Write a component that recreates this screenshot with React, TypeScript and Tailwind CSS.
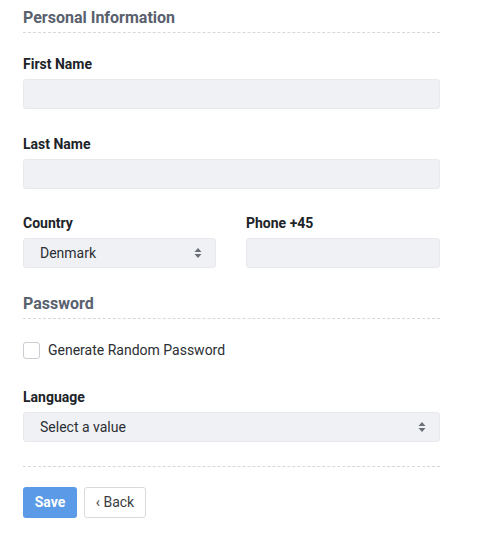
import React from "react";

function Arrows() {
  return (
    <svg width="8" height="12" viewBox="0 0 8 12" className="shrink-0">
      <path d="M4 1 L7.5 5 H0.5 Z" fill="#6b6f76" />
      <path d="M4 11 L7.5 7 H0.5 Z" fill="#6b6f76" />
    </svg>
  );
}

function Label({ children }: { children: React.ReactNode }) {
  return <div className="text-[14px] leading-[17px] font-bold text-[#202328] mb-[6px]">{children}</div>;
}

function Input() {
  return <div className="h-[30px] rounded-[3px] bg-[#f0f1f4] border border-[#e8e9ec]" />;
}

function Select({ value }: { value: string }) {
  return (
    <div className="h-[30px] rounded-[3px] bg-[#f0f1f4] border border-[#e8e9ec] flex items-center justify-between pl-[16px] pr-[13px] text-[14px] text-[#2b2e33]">
      <span>{value}</span>
      <Arrows />
    </div>
  );
}

function Heading({ children }: { children: React.ReactNode }) {
  return (
    <div className="text-[16px] leading-[20px] font-bold text-[#59616e] pb-[4px] border-b border-dashed border-[#d6d8dc]">
      {children}
    </div>
  );
}

export default function App() {
  return (
    <div className="bg-white w-[485px] h-[541px]" style={{ fontFamily: "Roboto, 'Liberation Sans', sans-serif" }}>
      <div className="ml-[23px] w-[417px] pt-[8px]">
        <Heading>Personal Information</Heading>
        <div className="mt-[23px]">
          <Label>First Name</Label>
          <Input />
        </div>
        <div className="mt-[27px]">
          <Label>Last Name</Label>
          <Input />
        </div>
        <div className="mt-[26px] flex gap-[30px]">
          <div className="w-[193px]">
            <Label>Country</Label>
            <Select value="Denmark" />
          </div>
          <div className="flex-1">
            <Label>Phone +45</Label>
            <Input />
          </div>
        </div>
        <div className="mt-[26px]">
          <Heading>Password</Heading>
        </div>
        <div className="mt-[23px] flex items-center gap-[8px] h-[17px]">
          <div className="w-[17px] h-[17px] rounded-[3px] border border-[#c9ccd1] bg-white" />
          <span className="text-[14px] leading-[17px] text-[#2b2e33]">Generate Random Password</span>
        </div>
        <div className="mt-[30px]">
          <Label>Language</Label>
          <Select value="Select a value" />
        </div>
        <div className="mt-[24px] border-b border-dashed border-[#d6d8dc]" />
        <div className="mt-[20px] flex gap-[7px]">
          <button className="w-[54px] h-[31px] rounded-[3px] bg-[#5a9ae6] text-white text-[14px] font-bold">Save</button>
          <button className="w-[62px] h-[31px] rounded-[3px] bg-white border border-[#d9dadc] text-[#3a3d42] text-[14px]">‹ Back</button>
        </div>
      </div>
    </div>
  );
}
